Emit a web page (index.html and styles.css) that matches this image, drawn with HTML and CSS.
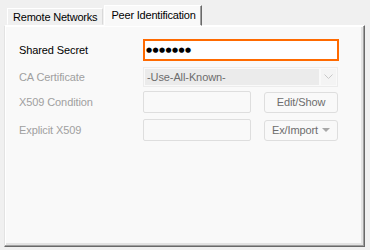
FILE: index.html
```html
<!DOCTYPE html>
<html lang="en">

<head>
    <meta charset="UTF-8">
    <meta name="viewport" content="width=device-width, initial-scale=1.0">
    <title>Peer Identification</title>
    <link rel="stylesheet" href="styles.css">
</head>

<body>
    <div class="tabs">
        <div class="tab">Remote Networks</div>
        <div class="tab active">Peer Identification</div>
    </div>

    <div class="panel">
        <div class="row">
            <label class="label" for="secret">Shared Secret</label>
            <div class="secret" id="secret"><span class="dots">●●●●●●●</span></div>
        </div>

        <div class="row row-select">
            <span class="label disabled">CA Certificate</span>
            <div class="select">
                <span class="value">-Use-All-Known-</span>
                <span class="arrow">
                    <svg width="9" height="6" viewBox="0 0 9 6"><path d="M0.5 0.5 L4.5 4.5 L8.5 0.5" fill="none" stroke="#c8c8c8" stroke-width="1"/></svg>
                </span>
            </div>
        </div>

        <div class="row">
            <span class="label disabled">X509 Condition</span>
            <div class="box"></div>
            <button class="button" disabled>Edit/Show</button>
        </div>

        <div class="row">
            <span class="label disabled">Explicit X509</span>
            <div class="box"></div>
            <button class="button" disabled>Ex/Import <svg class="caret" width="8" height="4" viewBox="0 0 8 4"><path d="M0 0 H8 L4 4 Z" fill="#a8a8a8"/></svg></button>
        </div>
    </div>
</body>

</html>
```

FILE: styles.css
```css
body {
    margin: 0;
    padding: 5px 5px 0 4px;
    background-color: #f0f0f0;
    font-family: "Liberation Sans", Arial, sans-serif;
    font-size: 11px;
    color: #000;
}

.tabs {
    display: flex;
    align-items: flex-end;
    height: 20px;
    padding-left: 3px;
}

.tab {
    height: 15px;
    line-height: 16px;
    padding: 0 5px 0 5px;
    border: 1px solid #d9d9d9;
    border-color: #fff #d9d9d9 transparent #fff;
    background-color: #f0f0f0;
    letter-spacing: -0.2px;
}

.tab.active {
    position: relative;
    height: 19px;
    line-height: 18px;
    margin-left: 1px;
    margin-bottom: -1px;
    padding: 0 5px 0 6px;
    background-color: #f9f9f9;
    border-color: #fff #696969 transparent #fff;
    box-shadow: inset -1px 0 0 #a0a0a0;
    z-index: 1;
}

.panel {
    width: 345px;
    height: 207px;
    padding: 13px 0 0 14px;
    background-color: #f9f9f9;
    border: 1px solid;
    border-color: #fff #696969 #696969 #e3e3e3;
    box-shadow: inset -1px -1px 0 #a0a0a0, inset 1px 1px 0 #fff, inset -3px -3px 0 #e3e3e3;
}

.row {
    display: flex;
    align-items: center;
    height: 22px;
    margin-bottom: 6px;
}

.row-select {
    height: 20px;
    margin-bottom: 4px;
}

.label {
    width: 124px;
    letter-spacing: -0.1px;
}

.disabled {
    color: #a0a0a0;
}

.secret {
    width: 196px;
    height: 22px;
    box-sizing: border-box;
    border: 2px solid #ff6a00;
    background-color: #fff;
    display: flex;
    align-items: center;
    padding-left: 1px;
}

.dots {
    font-family: "DejaVu Sans", sans-serif;
    font-size: 7px;
    letter-spacing: 0.4px;
}

.select {
    width: 195px;
    height: 20px;
    box-sizing: border-box;
    border: 1px solid #ececec;
    padding: 1px;
    display: flex;
}

.select .value {
    flex: 1;
    background-color: #ebebeb;
    color: #6d6d6d;
    padding-left: 2px;
    line-height: 16px;
    letter-spacing: -0.1px;
}

.select .arrow {
    width: 15px;
    margin-left: 2px;
    background-color: #f4f4f4;
    display: flex;
    align-items: center;
    justify-content: center;
}

.box {
    width: 108px;
    height: 22px;
    box-sizing: border-box;
    border: 1px solid #dedede;
    border-radius: 2px;
}

.button {
    margin-left: 13px;
    width: 74px;
    height: 21px;
    box-sizing: border-box;
    border: 1px solid #dedede;
    border-radius: 3px;
    background-color: #f9f9f9;
    color: #6d6d6d;
    font-family: inherit;
    font-size: 11px;
    letter-spacing: -0.1px;
    padding: 0;
    display: flex;
    align-items: center;
    justify-content: center;
}

.button .caret {
    margin-left: 4px;
}
```
